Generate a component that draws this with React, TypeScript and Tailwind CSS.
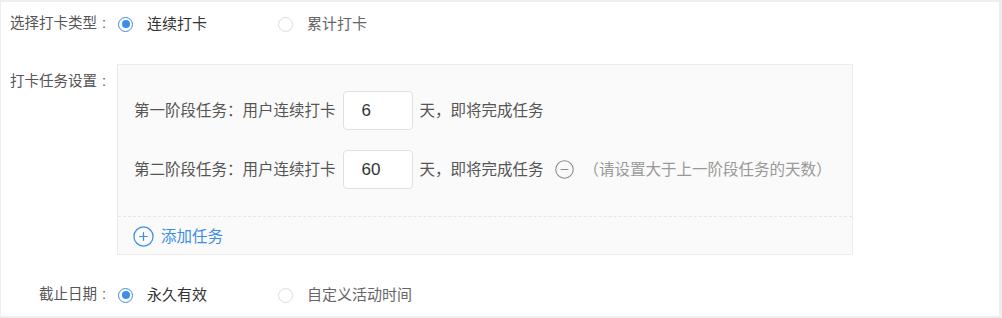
import { CircleMinus, CirclePlus } from "lucide-react";

const font = {
  fontFamily: '"Liberation Sans", "Noto Sans CJK SC", sans-serif',
};

interface RadioProps {
  label: string;
  checked?: boolean;
}

/** 单选项 */
function Radio({ label, checked = false }: RadioProps) {
  return (
    <label className="flex items-center w-[160px] cursor-pointer">
      <span
        className={
          checked
            ? "w-[15px] h-[15px] rounded-full border border-[#3a8ee6] bg-white flex items-center justify-center"
            : "w-[15px] h-[15px] rounded-full border border-[#dcdcdc] bg-white"
        }
      >
        {checked && <span className="w-[8px] h-[8px] rounded-full bg-[#3a8ee6]" />}
      </span>
      <span
        className={
          checked
            ? "ml-[14px] text-[15px] text-[#333333]"
            : "ml-[14px] text-[15px] text-[#666666]"
        }
      >
        {label}
      </span>
    </label>
  );
}

/** 表单标签 */
function FieldLabel({ text }: { text: string }) {
  return (
    <div className="w-[101px] shrink-0 text-right text-[14.5px] text-[#555555]">
      {text}
      <span className="ml-[5px] mr-[3px]">:</span>
    </div>
  );
}

interface StageRowProps {
  title: string;
  days: string;
  removable?: boolean;
}

/** 阶段任务行 */
function StageRow({ title, days, removable = false }: StageRowProps) {
  return (
    <div className="flex items-center h-[39px] text-[15.5px] text-[#555555]">
      <span>{title}：用户连续打卡</span>
      <input
        value={days}
        readOnly
        className="mx-[7px] w-[70px] h-[39px] rounded-[4px] border border-[#e0e0e0] bg-white pl-[18px] text-[17px] text-[#333333] outline-none"
        style={font}
      />
      <span>天，即将完成任务</span>
      {removable && (
        <>
          <CircleMinus className="ml-[10px] w-[21px] h-[21px] text-[#8a8a8a]" strokeWidth={1.2} />
          <span className="ml-[9px] text-[#999999]">（请设置大于上一阶段任务的天数）</span>
        </>
      )}
    </div>
  );
}

export default function App() {
  return (
    <div
      className="w-[1002px] h-[318px] box-border bg-white border-t-2 border-r-[3px] border-b-2 border-l border-[#eeeeee] pl-[7px] overflow-hidden"
      style={font}
    >
      {/* 打卡类型 */}
      <div className="flex items-center h-[44px]">
        <FieldLabel text="选择打卡类型" />
        <div className="flex items-center ml-[9px]">
          <Radio label="连续打卡" checked />
          <Radio label="累计打卡" />
        </div>
      </div>

      {/* 任务设置 */}
      <div className="flex items-start mt-[18px]">
        <div className="pt-[7px]">
          <FieldLabel text="打卡任务设置" />
        </div>
        <div className="ml-[8px] w-[736px] h-[191px] border border-[#ececec] bg-[#fafafa] flex flex-col">
          <div className="flex flex-col gap-[20px] pt-[26px] pb-[27px] pl-[16px]">
            <StageRow title="第一阶段任务" days="6" />
            <StageRow title="第二阶段任务" days="60" removable />
          </div>
          <div className="flex-1 border-t border-dashed border-[#e6e6e6] flex items-center pl-[14px] pt-[2px]">
            <button className="flex items-center text-[15.5px] text-[#3a8ee6] cursor-pointer">
              <CirclePlus className="w-[23px] h-[23px]" strokeWidth={1.3} />
              <span className="ml-[6px]">添加任务</span>
            </button>
          </div>
        </div>
      </div>

      {/* 截止日期 */}
      <div className="flex items-center h-[44px] mt-[18px]">
        <FieldLabel text="截止日期" />
        <div className="flex items-center ml-[9px]">
          <Radio label="永久有效" checked />
          <Radio label="自定义活动时间" />
        </div>
      </div>
    </div>
  );
}
